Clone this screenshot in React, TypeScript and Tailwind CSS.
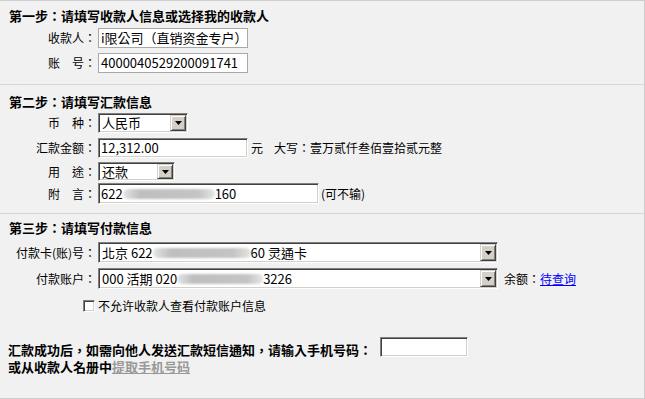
import React from "react";

const font = { fontFamily: "'Noto Sans CJK TC', 'Noto Sans CJK SC', sans-serif" };

function Blur({ w }: { w: number }) {
  return (
    <span
      className="inline-block h-[10px] rounded-[5px] bg-[linear-gradient(90deg,rgba(190,190,190,0.4),#bfbfbf_18%,#c4c4c4_82%,rgba(190,190,190,0.4))] blur-[1px]"
      style={{ width: w }}
    />
  );
}

function Label({ children }: { children: React.ReactNode }) {
  return <div className="w-[98px] shrink-0 pr-[2px] text-right text-[12px] leading-[16px] text-black">{children}</div>;
}

// section 1 style: flat grey border
function FlatBox({ w, children }: { w: number; children: React.ReactNode }) {
  return (
    <div
      className="flex h-full items-center whitespace-nowrap border border-[#a9a9a9] bg-white pl-[2px] text-[13px] leading-[14px]"
      style={{ width: w }}
    >
      {children}
    </div>
  );
}

// sunken win2k style box
function InsetBox({ w, children }: { w: number; children: React.ReactNode }) {
  return (
    <div
      className="flex h-full items-center whitespace-nowrap border border-t-[#808080] border-l-[#808080] border-r-white border-b-white bg-white pl-[2px] text-[13px] leading-[14px] shadow-[inset_1px_1px_0_#404040,inset_-1px_-1px_0_#d4d0c8]"
      style={{ width: w }}
    >
      {children}
    </div>
  );
}

function Select({ w, children }: { w: number; children: React.ReactNode }) {
  return (
    <div
      className="flex h-full items-stretch border border-t-[#808080] border-l-[#808080] border-r-white border-b-white bg-white p-[1px] shadow-[inset_1px_1px_0_#404040,inset_-1px_-1px_0_#d4d0c8]"
      style={{ width: w }}
    >
      <div className="flex flex-1 items-center whitespace-nowrap pl-[2px] text-[13px] leading-[14px]">{children}</div>
      <div className="flex w-[16px] items-center justify-center border border-t-[#d4d0c8] border-l-[#d4d0c8] border-r-[#404040] border-b-[#404040] bg-[#d4d0c8] shadow-[inset_1px_1px_0_#ffffff,inset_-1px_-1px_0_#808080]">
        <svg width="7" height="4" viewBox="0 0 7 4">
          <path d="M0 0h7L3.5 4z" fill="#000" />
        </svg>
      </div>
    </div>
  );
}

export default function App() {
  return (
    <div
      className="h-[399px] w-[645px] overflow-hidden border-t border-r border-b border-[#cfcfcf] bg-[#f1f1f1] text-black"
      style={font}
    >
      {/* step 1 */}
      <div className="h-[84px] border-b border-[#d6d6d6] pt-[7px]">
        <div className="pl-[9px] text-[13px] font-bold leading-[16px]">第一步：请填写收款人信息或选择我的收款人</div>
        <div className="mt-[4px] flex h-[20px] items-center">
          <Label>收款人：</Label>
          <FlatBox w={150}>i限公司（直销资金专户）</FlatBox>
        </div>
        <div className="mt-[5px] flex h-[20px] items-center">
          <Label>账　号：</Label>
          <FlatBox w={150}>4000040529200091741</FlatBox>
        </div>
      </div>

      {/* step 2 */}
      <div className="h-[129px] border-b border-[#d6d6d6] pt-[9px]">
        <div className="pl-[9px] text-[13px] font-bold leading-[16px]">第二步：请填写汇款信息</div>
        <div className="mt-[3px] flex h-[20px] items-center">
          <Label>币　种：</Label>
          <Select w={90}>人民币</Select>
        </div>
        <div className="mt-[5px] flex h-[20px] items-center">
          <Label>汇款金额：</Label>
          <InsetBox w={150}>12,312.00</InsetBox>
          <span className="ml-[3px] text-[12px]">元</span>
          <span className="ml-[11px] text-[12px]">大写：壹万贰仟叁佰壹拾贰元整</span>
        </div>
        <div className="mt-[4px] flex h-[19px] items-center">
          <Label>用　途：</Label>
          <Select w={77}>还款</Select>
        </div>
        <div className="mt-[2px] flex h-[21px] items-center">
          <Label>附　言：</Label>
          <InsetBox w={221}>
            622
            <Blur w={92} />
            160
          </InsetBox>
          <span className="ml-[2px] text-[12px]">(可不输)</span>
        </div>
      </div>

      {/* step 3 */}
      <div className="pt-[6px]">
        <div className="pl-[9px] text-[13px] font-bold leading-[16px]">第三步：请填写付款信息</div>
        <div className="mt-[6px] flex h-[21px] items-center">
          <Label>付款卡(账)号：</Label>
          <Select w={400}>
            北京 622
            <Blur w={98} />
            60 灵通卡
          </Select>
        </div>
        <div className="mt-[5px] flex h-[21px] items-center">
          <Label>付款账户：</Label>
          <Select w={400}>
            000 活期 020
            <Blur w={86} />
            3226
          </Select>
          <span className="ml-[6px] text-[12px]">余额：</span>
          <a href="#" className="text-[12px] text-[#0000ff] underline">待查询</a>
        </div>
        <div className="mt-[10px] flex h-[14px] items-center pl-[83px]">
          <span className="h-[12px] w-[12px] border border-t-[#808080] border-l-[#808080] border-r-white border-b-white bg-white shadow-[inset_1px_1px_0_#404040,inset_-1px_-1px_0_#d4d0c8]" />
          <span className="ml-[3px] text-[12px] leading-[14px]">不允许收款人查看付款账户信息</span>
        </div>

        <div className="mt-[24px] flex h-[20px] items-start pl-[8px]">
          <span className="mt-[6px] text-[13px] font-bold leading-[14px]">
            汇款成功后，如需向他人发送汇款短信通知，请输入手机号码：
          </span>
          <div className="ml-[8px] h-[20px] w-[88px] border border-t-[#808080] border-l-[#808080] border-r-white border-b-white bg-white shadow-[inset_1px_1px_0_#404040,inset_-1px_-1px_0_#d4d0c8]" />
        </div>
        <div className="mt-[3px] pl-[8px] text-[13px] font-bold leading-[14px]">
          或从收款人名册中<a href="#" className="text-[#999999] underline">提取手机号码</a>
        </div>
      </div>
    </div>
  );
}
